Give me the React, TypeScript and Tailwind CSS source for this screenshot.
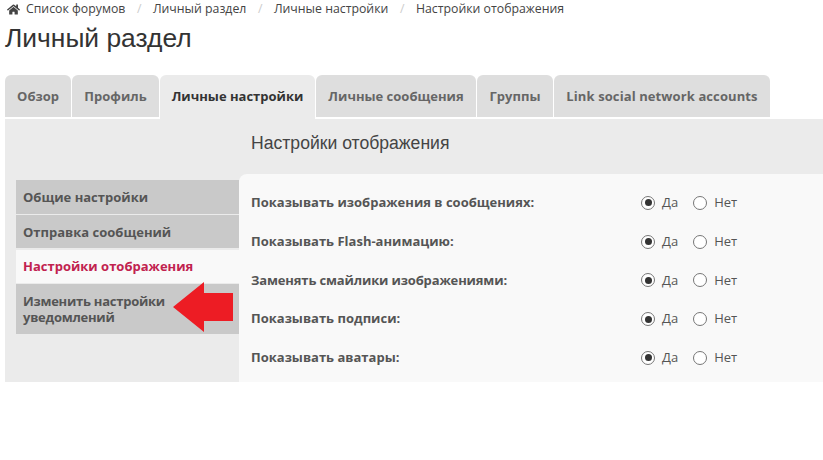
import React from "react";
import { FaHome } from "react-icons/fa";

const crumbs = ["Личный раздел", "Личные настройки", "Настройки отображения"];

const tabs = [
  { label: "Обзор", width: "w-[66px]" },
  { label: "Профиль", width: "w-[87px]" },
  { label: "Личные настройки", width: "w-[155px]", active: true },
  { label: "Личные сообщения", width: "w-[160px]" },
  { label: "Группы", width: "w-[76px]" },
  { label: "Link social network accounts", width: "w-[216px] tracking-[0.1px]" },
];

const rows = [
  { label: "Показывать изображения в сообщениях:" },
  { label: "Показывать Flash-анимацию:" },
  { label: "Заменять смайлики изображениями:", tight: "tracking-[-0.15px]" },
  { label: "Показывать подписи:" },
  { label: "Показывать аватары:" },
];

const Radio = ({ checked, label }: { checked?: boolean; label: string }) => (
  <span className="flex items-center">
    <span className="w-[14px] h-[14px] rounded-full border-[1.5px] border-[#767676] bg-white flex items-center justify-center">
      {checked && <span className="w-[7px] h-[7px] rounded-full bg-[#333]" />}
    </span>
    <span className="ml-[7px] text-[13px] text-[#555]">{label}</span>
  </span>
);

export default function App() {
  return (
    <div className="relative w-[823px] h-[460px] overflow-hidden bg-white font-['Open_Sans',sans-serif]">
      {/* breadcrumbs */}
      <div className="flex items-center h-[19px] pl-[7px] text-[12.3px] text-[#444]">
        <FaHome className="w-[13px] h-[13px] text-[#444]" />
        <span className="ml-[6px]">Список форумов</span>
        {crumbs.map((c) => (
          <React.Fragment key={c}>
            <span className="mx-[11.5px] text-[#ccc]">/</span>
            <span>{c}</span>
          </React.Fragment>
        ))}
      </div>
      <h1 className="pl-[5px] text-[26.4px] leading-[36px] mt-[1px] text-[#333] font-['Liberation_Sans',sans-serif]">
        Личный раздел
      </h1>

      {/* tabs */}
      <div className="flex items-start gap-[1px] ml-[5px] mt-[19px] h-[44px]">
        {tabs.map((t) => (
          <div
            key={t.label}
            className={`${t.width} pt-[2px] flex items-center justify-center rounded-t-[6px] text-[13px] font-bold ${
              t.active ? "h-[44px] pb-[2px] bg-[#ebebeb] text-[#333]" : "h-[42px] bg-[#dedede] text-[#666]"
            }`}
          >
            {t.label}
          </div>
        ))}
      </div>

      {/* panel */}
      <div className="ml-[5px] h-[263px] bg-[#ebebeb] flex">
        <div className="w-[234px] pl-[11px] pt-[61px] shrink-0">
          <div className="h-[34px] mb-[1px] pt-[2px] flex items-center pl-[7px] bg-[#c9c9c9] text-[13px] font-bold text-[#555]">
            Общие настройки
          </div>
          <div className="h-[33px] mb-[2px] pt-[2px] flex items-center pl-[7px] bg-[#c9c9c9] text-[13px] font-bold text-[#555]">
            Отправка сообщений
          </div>
          <div className="h-[33px] mb-[1px] flex items-center pl-[7px] bg-[#f9f9f9] text-[13px] font-bold text-[#c1224f]">
            Настройки отображения
          </div>
          <div className="h-[50px] flex items-center pl-[7px] bg-[#c9c9c9] text-[13px] leading-[16px] font-bold text-[#555] tracking-[-0.25px]">
            <span>
              Изменить настройки
              <br />
              уведомлений
            </span>
          </div>
        </div>
        <div className="flex-1 flex flex-col">
          <div className="h-[55px] pl-[12px] pb-[7px] flex items-center text-[17.6px] text-[#444] font-['Liberation_Sans',sans-serif]">
            Настройки отображения
          </div>
          <div className="flex-1 bg-[#f9f9f9] rounded-tl-[8px] pl-[12px] pt-[9.4px]">
            {rows.map((r) => (
              <div key={r.label} className="h-[38.75px] flex items-center">
                <span className={`w-[390px] text-[13px] font-bold text-[#555] ${r.tight ?? ""}`}>{r.label}</span>
                <span className="flex gap-[15px]">
                  <Radio checked label="Да" />
                  <Radio label="Нет" />
                </span>
              </div>
            ))}
          </div>
        </div>
      </div>

      {/* red arrow annotation over the menu */}
      <svg className="absolute left-[172px] top-[280px]" width="62" height="54" viewBox="0 0 62 54">
        <path d="M1 27 L32 2 L32 13 L61 13 L61 41 L32 41 L32 52 Z" fill="#ed1c24" />
      </svg>
    </div>
  );
}
